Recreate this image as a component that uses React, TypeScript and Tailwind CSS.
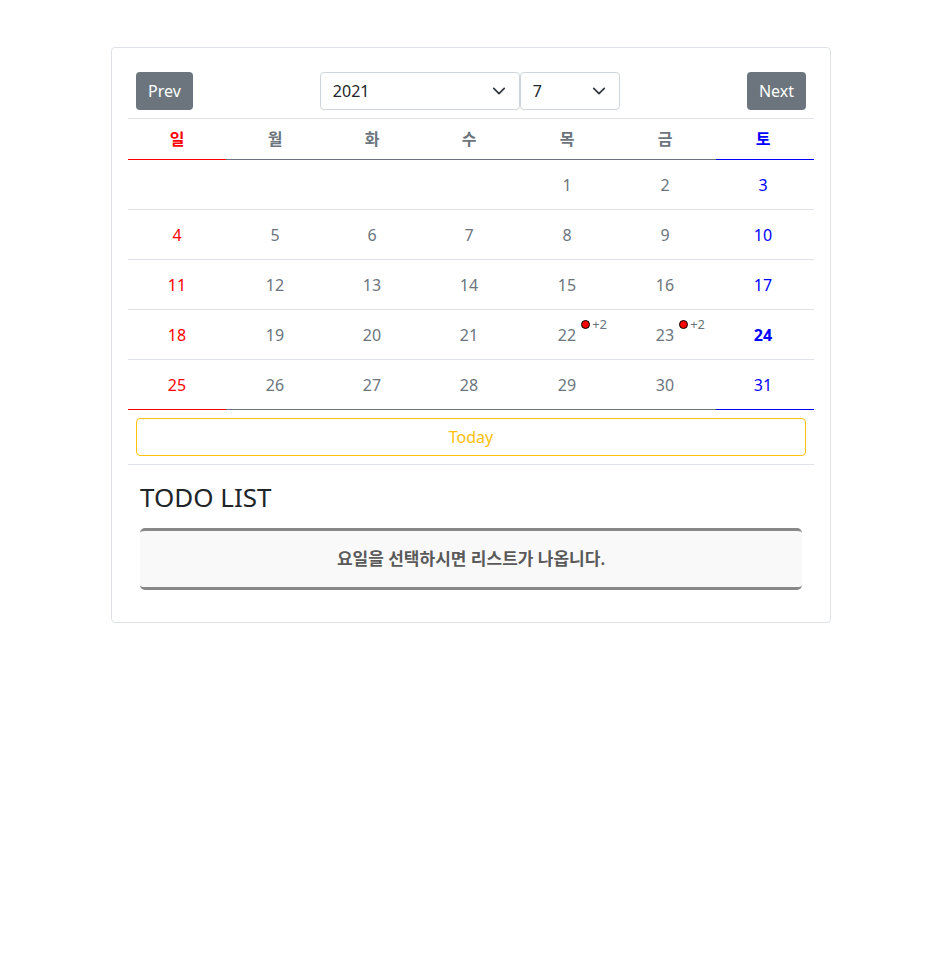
import React, { useState } from 'react';

const DAYS = ['일', '월', '화', '수', '목', '금', '토'];

const WEEKS: (number | null)[][] = [
  [null, null, null, null, 1, 2, 3],
  [4, 5, 6, 7, 8, 9, 10],
  [11, 12, 13, 14, 15, 16, 17],
  [18, 19, 20, 21, 22, 23, 24],
  [25, 26, 27, 28, 29, 30, 31],
];

const EVENTS: Record<number, number> = { 22: 2, 23: 2 };
const TODAY = 24;

const Chevron = () => (
  <svg className="absolute right-[14px] top-1/2 -translate-y-1/2 pointer-events-none" width="14" height="14" viewBox="0 0 16 16">
    <path d="M2 5l6 6 6-6" fill="none" stroke="#343a40" strokeWidth="2" strokeLinecap="round" strokeLinejoin="round" />
  </svg>
);

const dayColor = (i: number) => (i === 0 ? 'text-[#ff0000]' : i === 6 ? 'text-[#0000ff]' : 'text-[#6c757d]');
const edgeBorder = (i: number) => (i === 0 ? 'border-[#ff0000]' : i === 6 ? 'border-[#0000ff]' : 'border-[#6c757d]');
// the table columns in the original drift a couple of px left toward the right side
const shift = (i: number) => (i < 2 ? '' : i === 2 ? 'pr-[2px]' : 'pr-[4px]');

export default function App() {
  const [year, setYear] = useState('2021');
  const [month, setMonth] = useState('7');

  return (
    <div className="min-h-screen bg-white pt-[47px] font-['Noto_Sans','Noto_Sans_CJK_KR',sans-serif]">
      <div className="ml-[111px] w-[720px] border border-[#dee2e6] rounded-[4px] p-4">
        <div className="flex items-center justify-between p-2 border-b border-[#dee2e6]">
          <button className="h-[38px] px-3 rounded-[4px] bg-[#6c757d] text-white text-[16px]">Prev</button>
          <div className="flex">
            <div className="relative">
              <select
                value={year}
                onChange={(e) => setYear(e.target.value)}
                className="appearance-none w-[200px] h-[38px] pl-3 border border-[#ced4da] rounded-[4px] text-[16px] text-[#212529] bg-white outline-none"
              >
                {[2019, 2020, 2021, 2022, 2023].map((y) => (
                  <option key={y} value={y}>{y}</option>
                ))}
              </select>
              <Chevron />
            </div>
            <div className="relative">
              <select
                value={month}
                onChange={(e) => setMonth(e.target.value)}
                className="appearance-none w-[100px] h-[38px] pl-3 border border-[#ced4da] rounded-[4px] text-[16px] text-[#212529] bg-white outline-none"
              >
                {Array.from({ length: 12 }, (_, i) => i + 1).map((m) => (
                  <option key={m} value={m}>{m}</option>
                ))}
              </select>
              <Chevron />
            </div>
          </div>
          <button className="h-[38px] px-3 rounded-[4px] bg-[#6c757d] text-white text-[16px]">Next</button>
        </div>

        <div className="grid grid-cols-7">
          {DAYS.map((d, i) => (
            <div key={d} className={`h-[41px] flex items-center justify-center ${shift(i)} font-bold text-[16px] border-b ${edgeBorder(i)} ${dayColor(i)}`}>
              {d}
            </div>
          ))}
          {WEEKS.map((week, w) =>
            week.map((n, i) => {
              const last = w === WEEKS.length - 1;
              return (
                <div
                  key={`${w}-${i}`}
                  className={`h-[50px] flex items-center justify-center ${shift(i)} text-[16px] border-b ${last ? edgeBorder(i) : 'border-[#dee2e6]'} ${dayColor(i)}`}
                >
                  {n !== null && (
                    <span className={`relative ${n === TODAY ? 'font-bold' : ''}`}>
                      {n}
                      {EVENTS[n] && (
                        <span className="absolute left-full top-[-5px] ml-[5px] flex items-center gap-[2px] whitespace-nowrap">
                          <span className="w-[9px] h-[9px] rounded-full bg-[#ff0000] border border-black" />
                          <span className="text-[13px] leading-none text-[#6c757d] font-normal">+{EVENTS[n]}</span>
                        </span>
                      )}
                    </span>
                  )}
                </div>
              );
            })
          )}
        </div>

        <div className="p-2 border-b border-[#dee2e6]">
          <button className="w-full h-[38px] border border-[#ffc107] rounded-[4px] text-[#ffc107] text-[16px] bg-white">Today</button>
        </div>

        <div className="px-3 pt-[17px] pb-4">
          <h3 className="text-[26px] leading-[1.2] text-[#212529] mb-[15px]">TODO LIST</h3>
          <div className="h-[62px] flex items-center justify-center bg-[#f9f9f9] border-y-[3px] border-[#888888] rounded-[5px] text-[17px] font-semibold text-[#5a5a5a]">
            요일을 선택하시면 리스트가 나옵니다.
          </div>
        </div>
      </div>
    </div>
  );
}
